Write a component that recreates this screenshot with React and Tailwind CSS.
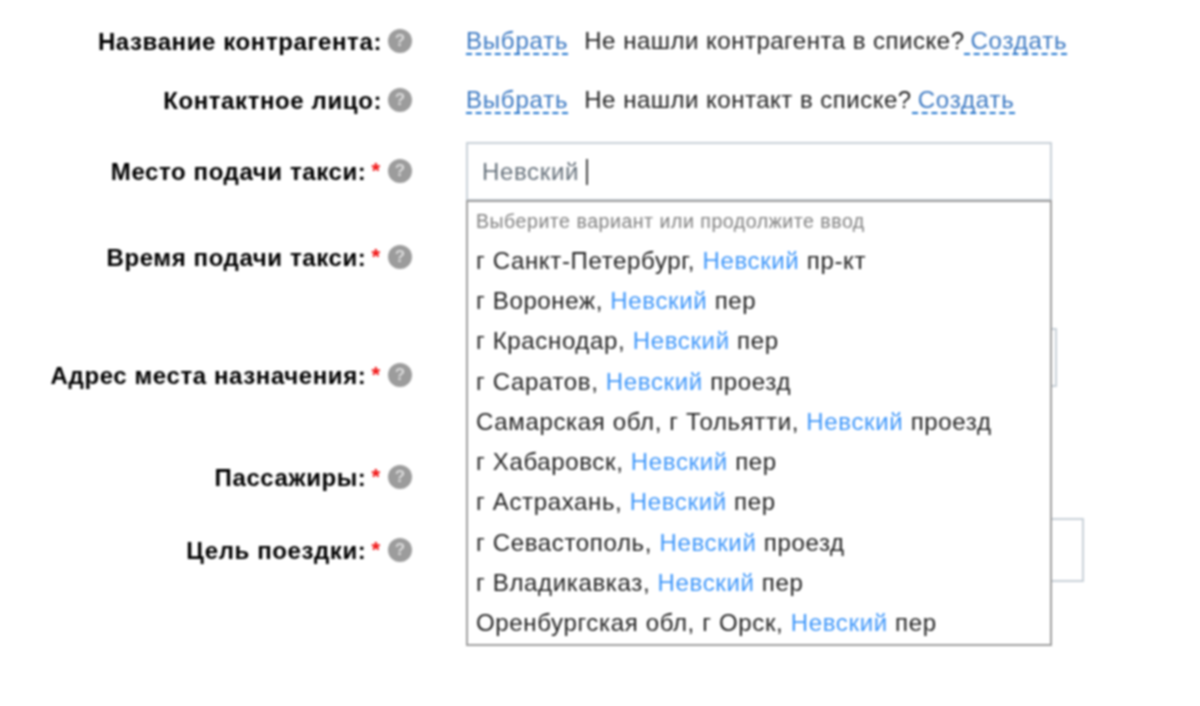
const SUGGESTIONS = [
  ['г Санкт-Петербург, ', ' пр-кт'],
  ['г Воронеж, ', ' пер'],
  ['г Краснодар, ', ' пер'],
  ['г Саратов, ', ' проезд'],
  ['Самарская обл, г Тольятти, ', ' проезд'],
  ['г Хабаровск, ', ' пер'],
  ['г Астрахань, ', ' пер'],
  ['г Севастополь, ', ' проезд'],
  ['г Владикавказ, ', ' пер'],
  ['Оренбургская обл, г Орск, ', ' пер'],
];

function Help() {
  return (
    <span className="ml-[6px] flex h-[24px] w-[24px] shrink-0 items-center justify-center rounded-full bg-[#9c9c9c] text-[17px] font-bold text-[#dcdcdc]">
      ?
    </span>
  );
}

function Label({ text, required, className = '' }) {
  return (
    <div className={`flex h-[58px] w-[412px] shrink-0 items-center justify-end ${className}`}>
      <span className="pt-[2px] text-[24px] font-bold tracking-[0.6px] text-black">{text}</span>
      {required && <span className="mb-[2px] ml-[5px] mr-[2px] text-[22px] font-bold text-[#f01010]">*</span>}
      <Help />
    </div>
  );
}

function Pick({ children, className = '' }) {
  return (
    <span className={`border-b-2 border-dashed border-[#1f74cf] leading-[25px] tracking-[0.8px] text-[#3a78c2] ${className}`}>
      {children}
    </span>
  );
}

function LinkRow({ what }) {
  return (
    <div className="ml-[54px] flex h-[58px] items-center text-[24px] tracking-[0.5px] text-[#1f1f1f]">
      <Pick>Выбрать</Pick>
      <span className="ml-[16px] whitespace-pre">Не нашли {what} в списке?</span>
      <Pick className="pl-[6px]">Создать</Pick>
    </div>
  );
}

export default function App() {
  return (
    <div className="h-[706px] w-[1200px] overflow-hidden bg-white pt-[12px] font-['Liberation_Sans',Arial,sans-serif] blur-[0.8px]">
      <div className="flex">
        <Label text="Название контрагента:" />
        <LinkRow what="контрагента" />
      </div>
      <div className="mt-px flex">
        <Label text="Контактное лицо:" />
        <LinkRow what="контакт" />
      </div>

      <div className="mt-[13px] flex">
        <Label text="Место подачи такси:" required />
        <div className="relative z-10 ml-[54px]">
          <div className="flex h-[59px] w-[586px] items-center border-2 border-[#c8d0d8] bg-white pl-[14px] text-[24px] tracking-[0.65px] text-[#66717b]">
            Невский
            <span className="ml-[7px] h-[26px] w-[2px] bg-[#444]" />
          </div>
          <div className="absolute left-0 top-[58px] w-[586px] border-2 border-[#9e9e9e] bg-white pb-[1px] pl-[8px] text-[24px] tracking-[0.65px] text-[#1f1f1f]">
            <div className="flex h-[38px] items-center pt-[1px] text-[19.5px] tracking-[0.55px] text-[#808080]">
              Выберите вариант или продолжите ввод
            </div>
            {SUGGESTIONS.map(([before, after]) => (
              <div key={before} className="flex h-[40.3px] items-center whitespace-pre pt-[1px]">
                {before}
                <span className="text-[#3f97fa]">Невский</span>
                {after}
              </div>
            ))}
          </div>
        </div>
      </div>

      <div className="mt-[27px] flex">
        <Label text="Время подачи такси:" required />
      </div>

      <div className="mt-[42px] flex">
        <Label text="Адрес места назначения:" required className="mt-[18px]" />
        <div className="ml-[54px] h-[59px] w-[591px] border-2 border-[#c8d0d8]" />
      </div>

      <div className="mt-[44px] flex">
        <Label text="Пассажиры:" required />
      </div>

      <div className="mt-[12px] flex">
        <Label text="Цель поездки:" required className="mt-[3px]" />
        <div className="ml-[54px] h-[64px] w-[618px] border-2 border-[#c8d0d8]" />
      </div>
    </div>
  );
}
